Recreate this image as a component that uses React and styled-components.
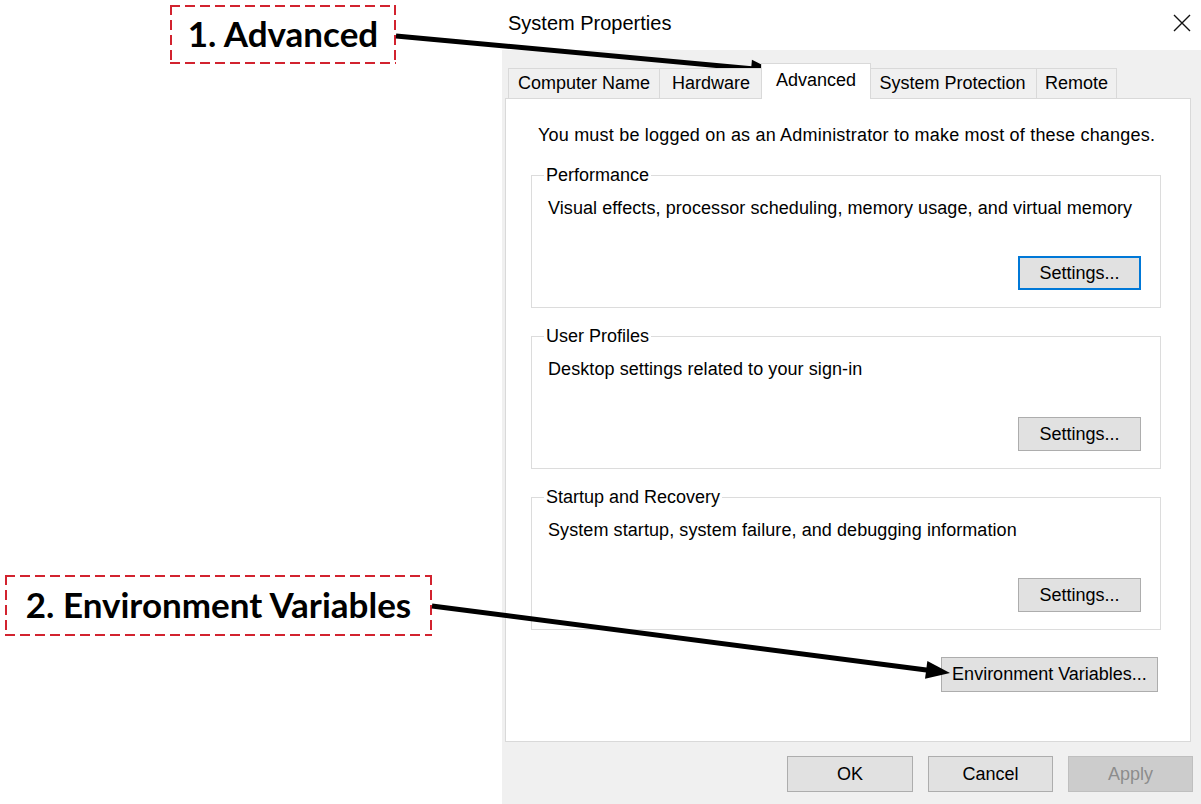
import React from 'react'
import styled, { createGlobalStyle } from 'styled-components'

const GlobalStyle = createGlobalStyle`
  html, body {
    margin: 0;
    padding: 0;
    background: #fff;
    overflow: hidden;
  }
`

const Page = styled.div`
  position: relative;
  display: flex;
  width: 1201px;
  height: 804px;
  background: #fff;
  font-family: "Liberation Sans", Arial, sans-serif;
`

const Notes = styled.div`
  width: 502px;
  display: flex;
  flex-direction: column;
  align-items: flex-start;
`

const dash = '#d2232f'

const Callout = styled.div`
  box-sizing: border-box;
  width: ${p => p.w}px;
  height: ${p => p.h}px;
  margin: ${p => p.m};
  padding-bottom: 4px;
  display: flex;
  align-items: center;
  justify-content: center;
  font-family: Lato, "Open Sans", sans-serif;
  font-weight: 700;
  font-size: 35px;
  color: #000;
  background:
    linear-gradient(90deg, ${dash} 10px, transparent 10px) top left / 15px 2px repeat-x,
    linear-gradient(90deg, ${dash} 10px, transparent 10px) bottom left / 15px 2px repeat-x,
    linear-gradient(180deg, ${dash} 10px, transparent 10px) top left / 2px 15px repeat-y,
    linear-gradient(180deg, ${dash} 10px, transparent 10px) top right / 2px 15px repeat-y;
`

const Window = styled.div`
  width: 699px;
  display: flex;
  flex-direction: column;
`

const TitleBar = styled.div`
  height: 50px;
  box-sizing: border-box;
  padding: 0 6px 4px 6px;
  background: #fff;
  display: flex;
  align-items: center;
  justify-content: space-between;
  font-size: 20px;
  color: #000;
`

const Body = styled.div`
  flex: 1;
  background: #f0f0f0;
  padding: 13px 10px 0 3px;
  display: flex;
  flex-direction: column;
`

const TabStrip = styled.div`
  display: flex;
  align-items: flex-end;
  height: 35px;
  padding-left: 3px;
  position: relative;
  z-index: 1;
`

const Tab = styled.div`
  box-sizing: border-box;
  width: ${p => p.w}px;
  height: ${p => (p.active ? 36 : 31)}px;
  padding-bottom: ${p => (p.active ? 3 : 0)}px;
  margin: 0 ${p => (p.active ? -2 : 0)}px -1px ${p => (p.active ? -2 : -1)}px;
  display: flex;
  align-items: center;
  justify-content: center;
  border: 1px solid #d9d9d9;
  border-bottom: ${p => (p.active ? 'none' : '1px solid #d9d9d9')};
  background: ${p => (p.active ? '#fff' : '#f0f0f0')};
  font-size: 18px;
  color: #000;
  white-space: nowrap;
  z-index: ${p => (p.active ? 2 : 1)};
  &:first-child {
    margin-left: 0;
  }
`

const Panel = styled.div`
  box-sizing: border-box;
  height: 644px;
  background: #fff;
  border: 1px solid #d9d9d9;
  padding: 25px 29px 0 25px;
  display: flex;
  flex-direction: column;
  font-size: 18px;
  color: #000;
`

const Notice = styled.div`
  line-height: 22px;
  padding-left: 7px;
  margin-bottom: 18px;
  white-space: nowrap;
  letter-spacing: 0.2px;
`

const Group = styled.fieldset`
  margin: 0 0 17px 0;
  padding: 11px 19px 17px 16px;
  border: 1px solid #dcdcdc;
  min-width: 0;
`

const Legend = styled.legend`
  padding: 0 2px;
  margin-left: -4px;
  line-height: 22px;
`

const GroupText = styled.div`
  line-height: 22px;
  white-space: nowrap;
  letter-spacing: 0.08px;
`

const GroupActions = styled.div`
  display: flex;
  justify-content: flex-end;
  margin-top: 37px;
`

const Button = styled.button`
  box-sizing: border-box;
  width: ${p => p.w}px;
  height: ${p => p.h || 34}px;
  padding: 0;
  font-family: "Liberation Sans", Arial, sans-serif;
  font-size: 18px;
  color: ${p => (p.disabled ? '#8c8c8c' : '#000')};
  background: ${p => (p.disabled ? '#cccccc' : '#e1e1e1')};
  border: ${p => (p.focused ? '2px solid #0078d7' : p.disabled ? '1px solid #bfbfbf' : '1px solid #adadad')};
`

const EnvRow = styled.div`
  display: flex;
  justify-content: flex-end;
  margin: 10px 3px 0 0;
`

const Footer = styled.div`
  display: flex;
  justify-content: flex-end;
  gap: 15px;
  margin: 14px -2px 0 0;
`

const Overlay = styled.svg`
  position: absolute;
  top: 0;
  left: 0;
  pointer-events: none;
`

const CloseIcon = () => (
  <svg width="18" height="18" viewBox="0 0 18 18" style={{ marginRight: 4 }}>
    <path d="M1 1 L17 17 M17 1 L1 17" stroke="#111" strokeWidth="1.4" fill="none" />
  </svg>
)

const Arrow = ({ x1, y1, x2, y2 }) => {
  const dx = x2 - x1
  const dy = y2 - y1
  const len = Math.hypot(dx, dy)
  const ux = dx / len
  const uy = dy / len
  const head = 24
  const half = 9
  const bx = x2 - ux * head
  const by = y2 - uy * head
  const pts = [
    [x2, y2],
    [bx - uy * half, by + ux * half],
    [bx + uy * half, by - ux * half],
  ]
  return (
    <g>
      <line x1={x1} y1={y1} x2={x2 - ux * 18} y2={y2 - uy * 18} stroke="#000" strokeWidth="5" />
      <polygon points={pts.map(p => p.join(',')).join(' ')} fill="#000" />
    </g>
  )
}

const groups = [
  { title: 'Performance', text: 'Visual effects, processor scheduling, memory usage, and virtual memory', focused: true },
  { title: 'User Profiles', text: 'Desktop settings related to your sign-in' },
  { title: 'Startup and Recovery', text: 'System startup, system failure, and debugging information' },
]

const tabs = [
  { label: 'Computer Name', w: 152 },
  { label: 'Hardware', w: 104 },
  { label: 'Advanced', w: 110, active: true },
  { label: 'System Protection', w: 169 },
  { label: 'Remote', w: 81 },
]

export default function App() {
  return (
    <Page>
      <GlobalStyle />
      <Notes>
        <Callout w={226} h={59} m="5px 0 0 170px">1. Advanced</Callout>
        <Callout w={427} h={61} m="511px 0 0 5px">2. Environment Variables</Callout>
      </Notes>
      <Window>
        <TitleBar>
          <span>System Properties</span>
          <CloseIcon />
        </TitleBar>
        <Body>
          <TabStrip>
            {tabs.map(t => (
              <Tab key={t.label} w={t.w} active={t.active}>{t.label}</Tab>
            ))}
          </TabStrip>
          <Panel>
            <Notice>You must be logged on as an Administrator to make most of these changes.</Notice>
            {groups.map(g => (
              <Group key={g.title}>
                <Legend>{g.title}</Legend>
                <GroupText>{g.text}</GroupText>
                <GroupActions>
                  <Button w={123} focused={g.focused}>Settings...</Button>
                </GroupActions>
              </Group>
            ))}
            <EnvRow>
              <Button w={217} h={35}>Environment Variables...</Button>
            </EnvRow>
          </Panel>
          <Footer>
            <Button w={126} h={36}>OK</Button>
            <Button w={125} h={36}>Cancel</Button>
            <Button w={125} h={36} disabled>Apply</Button>
          </Footer>
        </Body>
      </Window>
      <Overlay width="1201" height="804">
        <Arrow x1={396} y1={36} x2={775} y2={71} />
        <Arrow x1={432} y1={606} x2={950} y2={673} />
      </Overlay>
    </Page>
  )
}
